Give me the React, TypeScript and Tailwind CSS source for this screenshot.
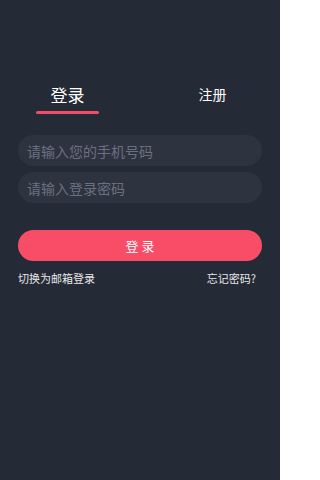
import { useState } from "react";

const font = { fontFamily: '"Noto Sans CJK SC", "Noto Sans", sans-serif' };

export default function App() {
  const [tab, setTab] = useState<"login" | "register">("login");
  const [phone, setPhone] = useState("");
  const [password, setPassword] = useState("");

  return (
    <div className="w-[280px] h-[480px] bg-[#252a37] text-white overflow-hidden" style={font}>
      {/* tabs */}
      <div className="pt-[82px] px-[36px] flex justify-between items-start">
        <button className="w-[63px] flex flex-col items-center" onClick={() => setTab("login")}>
          <span className="text-[17px] leading-[25px] text-white">登录</span>
          <span className={`mt-[4px] h-[3px] w-full rounded-full ${tab === "login" ? "bg-[#f24d66]" : "bg-transparent"}`} />
        </button>
        <button className="w-[63px] flex flex-col items-center" onClick={() => setTab("register")}>
          <span className="text-[14px] leading-[25px] text-white">注册</span>
          <span className={`mt-[4px] h-[3px] w-full rounded-full ${tab === "register" ? "bg-[#f24d66]" : "bg-transparent"}`} />
        </button>
      </div>

      {/* form */}
      <div className="px-[18px] mt-[21px] flex flex-col gap-[6px]">
        <input
          value={phone}
          onChange={(e) => setPhone(e.target.value)}
          placeholder="请输入您的手机号码"
          className="h-[31px] w-full rounded-full bg-[#2e3340] px-[9px] text-[14px] text-white placeholder:text-[#6b7080] outline-none"
          style={font}
        />
        <input
          type="password"
          value={password}
          onChange={(e) => setPassword(e.target.value)}
          placeholder="请输入登录密码"
          className="h-[31px] w-full rounded-full bg-[#2e3340] px-[9px] text-[14px] text-white placeholder:text-[#6b7080] outline-none"
          style={font}
        />
      </div>

      <div className="px-[18px] mt-[27px]">
        <button className="h-[31px] w-full rounded-full bg-[#f94c67] text-[13px] text-white">
          登 录
        </button>
      </div>

      <div className="pl-[18px] pr-[24px] mt-[9px] flex justify-between text-[11px] leading-[16px] text-[#e6e7ea]">
        <span>切换为邮箱登录</span>
        <span>忘记密码?</span>
      </div>
    </div>
  );
}
